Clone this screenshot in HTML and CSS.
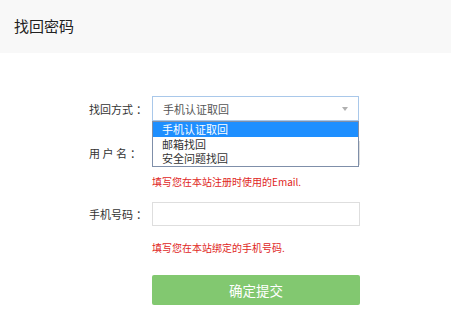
FILE: index.html
```html
<!DOCTYPE html>
<html lang="zh-CN">
<head>
<meta charset="utf-8">
<title>找回密码</title>
<link rel="stylesheet" href="styles.css">
</head>
<body>
<header class="top">
  <h1 class="title">找回密码</h1>
</header>
<main class="form">
  <div class="row">
    <label class="label">找回方式<span class="colon">：</span></label>
    <div class="select-wrap">
      <div class="select">
        <span class="select-text">手机认证取回</span>
        <svg class="caret" width="6" height="4" viewBox="0 0 6 4"><path d="M0 0H6L3 4Z" fill="#b0b0b0"/></svg>
      </div>
      <ul class="dropdown">
        <li class="opt active">手机认证取回</li>
        <li class="opt">邮箱找回</li>
        <li class="opt">安全问题找回</li>
      </ul>
    </div>
  </div>
  <div class="row row-user">
    <label class="label">用 户 名<span class="colon">：</span></label>
    <div class="input"></div>
  </div>
  <p class="hint hint-email">填写您在本站注册时使用的Email.</p>
  <div class="row row-phone">
    <label class="label">手机号码<span class="colon">：</span></label>
    <div class="input"></div>
  </div>
  <p class="hint hint-phone">填写您在本站绑定的手机号码.</p>
  <div class="row row-btn">
    <span class="label"></span>
    <button class="btn">确定提交</button>
  </div>
</main>
</body>
</html>
```

FILE: styles.css
```css
* { box-sizing: border-box; }
html, body { margin: 0; padding: 0; }
body {
  width: 451px;
  height: 324px;
  overflow: hidden;
  background: #fff;
  font-family: "Noto Sans CJK SC", "Noto Sans", sans-serif;
  color: #333;
}
.top {
  height: 53px;
  background: #f8f8f8;
  display: flex;
  align-items: center;
  padding-left: 14px;
}
.title {
  margin: 0;
  font-size: 15px;
  font-weight: normal;
  color: #222;
  line-height: 20px;
  margin-top: -1px;
}
.form {
  padding-left: 89px;
  padding-top: 43px;
  display: flex;
  flex-direction: column;
}
.row {
  display: flex;
  align-items: center;
}
.label {
  width: 63px;
  font-size: 11px;
  color: #333;
  line-height: 14px;
  white-space: pre;
}
.colon { margin-left: 3px; }
.select-wrap {
  position: relative;
  width: 207px;
}
.select {
  height: 25px;
  border: 1px solid #a9c8ea;
  background: #fff;
  display: flex;
  align-items: center;
  justify-content: space-between;
  padding: 0 10px 0 10px;
}
.select-text {
  font-size: 11px;
  color: #555;
  line-height: 14px;
}
.caret { display: block; }
.dropdown {
  position: absolute;
  left: 0;
  top: 25px;
  width: 207px;
  margin: 0;
  padding: 0;
  list-style: none;
  background: #fff;
  border: 1px solid #7f8fa9;
  z-index: 2;
}
.opt {
  height: 14.5px;
  line-height: 14.5px;
  font-size: 11px;
  color: #333;
  padding-left: 9px;
  overflow: hidden;
}
.opt.active {
  background: #1e8fff;
  color: #fff;
}
.row-user { margin-top: 20px; }
.input {
  width: 208px;
  height: 24px;
  border: 1px solid #dedede;
  background: #fff;
}
.hint {
  margin: 0;
  padding-left: 63px;
  font-size: 10px;
  line-height: 14px;
  color: #e0261d;
}
.hint-email { margin-top: 10px; }
.row-phone { margin-top: 13px; }
.hint-phone { margin-top: 15px; }
.row-btn { margin-top: 20px; }
.btn {
  width: 208px;
  height: 30px;
  border: 0;
  border-radius: 2px;
  background: #82c870;
  color: #fff;
  font-family: "Noto Sans CJK SC", "Noto Sans", sans-serif;
  font-size: 13.5px;
  padding: 0;
}
```
